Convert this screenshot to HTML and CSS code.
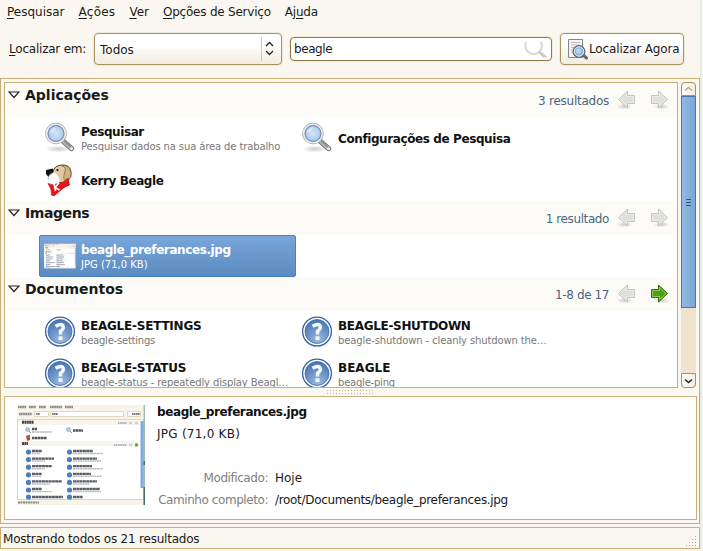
FILE: index.html
```html
<!DOCTYPE html>
<html lang="pt">
<head>
<meta charset="utf-8">
<title>Pesquisar</title>
<link rel="stylesheet" href="styles.css">
</head>
<body>
<svg width="0" height="0" class="defs" aria-hidden="true">
  <defs>
    <radialGradient id="lens"><stop offset="0" stop-color="#d3e4f7"/><stop offset=".6" stop-color="#b9d2f0"/><stop offset="1" stop-color="#8fb3e2"/></radialGradient>
    <radialGradient id="shade"><stop offset="0" stop-color="#000" stop-opacity=".2"/><stop offset="1" stop-color="#000" stop-opacity="0"/></radialGradient>
    <radialGradient id="helpfill" cx=".55" cy=".85" r=".9"><stop offset="0" stop-color="#9dbbe0"/><stop offset=".5" stop-color="#6b93c8"/><stop offset="1" stop-color="#426fae"/></radialGradient>
    <symbol id="magnifier" viewBox="0 0 32 32">
      <ellipse cx="14" cy="27" rx="13" ry="3.500" fill="url(#shade)"/>
      <path d="M19.500 19.500 27.500 26.500" stroke="#777" stroke-width="5.200" stroke-linecap="round"/>
      <path d="M19.500 19.500 27.500 26.500" stroke="#b5b5b2" stroke-width="3.400" stroke-linecap="round"/>
      <path d="M20 18.800 27 25" stroke="#8b8b8b" stroke-width="1.200"/>
      <circle cx="27.500" cy="26.500" r="1.500" fill="#e8e8e8"/>
      <circle cx="12" cy="11.500" r="9.200" fill="url(#lens)" stroke="#a3a39f" stroke-width="3"/>
      <circle cx="12" cy="11.500" r="9.300" fill="none" stroke="#ededeb" stroke-width="1.600"/>
      <circle cx="12" cy="11.500" r="7.900" fill="none" stroke="#6f91c4" stroke-width=".9"/>
      <path d="M6 11Q7 5 13 5.500Q10 7 9 10Z" fill="#fff" opacity=".5"/>
    </symbol>
    <symbol id="help" viewBox="0 0 32 32">
      <ellipse cx="17" cy="28" rx="12" ry="4" fill="url(#shade)"/>
      <circle cx="16" cy="15.500" r="14.400" fill="#fff" stroke="#36609f" stroke-width="1.300"/>
      <circle cx="16" cy="15.500" r="12" fill="url(#helpfill)" stroke="#3f6cab" stroke-width=".8"/>
      <path d="M11.500 10.300Q18.700 6.200 19.400 11.200Q19.500 13.400 16.500 15.200V18.500" fill="none" stroke="#f3f6fa" stroke-width="3.500"/>
      <path d="M14.500 20.300h4v3.700h-4z" fill="#f3f6fa"/>
    </symbol>
    <symbol id="arrow" viewBox="0 0 20 20">
      <ellipse class="shadow" cx="11.500" cy="16.500" rx="8" ry="3"/>
      <path class="body" d="M1.500 5.500h7v-4.500l9 8.500-9 8.500v-4.500h-7z"/>
      <path class="shine" d="M2.500 6.500h7V3.400l6.500 6.100-6.500 6.100v-3.100h-7z"/>
    </symbol>
  </defs>
</svg>

<div class="window">
  <nav class="menubar">
    <span><u>P</u>esquisar</span><span class="wide"><u>A</u>ções</span><span><u>V</u>er</span><span class="tight-2"><u>O</u>pções de Serviço</span><span class="tight-2">Aj<u>u</u>da</span>
  </nav>

  <div class="toolbar">
    <label class="scope-label tight-2"><u>L</u>ocalizar em:</label>
    <div class="combo"><span>Todos</span>
      <svg class="updown" width="20" height="26" viewBox="0 0 20 26"><path d="M.5 1v24" stroke="#d8c8a0"/><path d="M5 10l3.500-3.500L12 10M5 15l3.500 3.500L12 15" fill="none" stroke="#222" stroke-width="1.300"/></svg>
    </div>
    <div class="entry"><span class="tight-4">beagle</span>
      <svg width="26" height="19" viewBox="0 0 26 19"><path d="M3.200 2A8.300 8.300 0 0 0 3.300 9.500A8.300 8.300 0 0 0 18 9.500A8.300 8.300 0 0 0 18 2" fill="none" stroke="#d7d7d7" stroke-width="2"/><path d="M15 12l5 5h4l-6-5z" fill="#ccc" stroke="#ccc"/></svg>
    </div>
    <button class="find">
      <svg width="22" height="22" viewBox="0 0 22 22"><path d="M1.500 1.500h14v18h-14z" fill="#f4f4f2" stroke="#858582"/><path d="M4 4.500h9M4 7h9M4 9.500h5M4 12h3M4 14.500h3" stroke="#bdbdba"/><path d="M15.500 16.500l4 3.500" stroke="#696b68" stroke-width="3" stroke-linecap="round"/><circle cx="12" cy="13.500" r="5.800" fill="#8bb4e4" stroke="#666b72" stroke-width="1.400"/><circle cx="12" cy="13.500" r="4.700" fill="#8db5e6" stroke="#dfeaf6"/><circle cx="11.500" cy="13" r="2.500" fill="#b9d3f2"/></svg>
      <span>Localizar Agora</span>
    </button>
  </div>

  <main class="frame">
    <div class="upper">
      <div class="results">
        <header class="group">
          <svg class="tri" width="12" height="8" viewBox="0 0 12 8"><path d="M1 1h10L6 6.500z"/></svg>
          <h2>Aplicações</h2><span class="count">3 resultados</span>
          <svg class="nav off"><use href="#arrow" transform="matrix(-1 0 0 1 20 0)"/></svg><svg class="nav off"><use href="#arrow"/></svg>
        </header>
        <div class="grid">
          <div class="item"><svg class="icon"><use href="#magnifier"/></svg><div><b>Pesquisar</b><small>Pesquisar dados na sua área de trabalho</small></div></div>
          <div class="item"><svg class="icon"><use href="#magnifier"/></svg><div><b>Configurações de Pesquisa</b></div></div>
          <div class="item"><svg class="icon dog" viewBox="0 0 32 32"><path d="M9 8Q10 1.500 18 1Q26 .5 27 8Q28 13 24 16Q22 20 17 19L9 17Q5 17 4 14Z" fill="#e2c9a6" stroke="#332a20" stroke-width=".9"/><path d="M18 2Q23 3 20.500 9Q18.500 16 22 18Q27 16 27 9Q26 2 21 1.500Z" fill="#d2b183" stroke="#6a5233" stroke-width=".6"/><path d="M9 9Q12 8 13 11Q17 15 15 19.500Q10 20 5 17L4 13Z" fill="#fff"/><path d="M2 6L9 4.500 9 8Q5 10 4.500 13L2 10Z" fill="#111"/><circle cx="13.500" cy="6" r="1.100" fill="#111"/><path d="M4 19.500Q9 22 15 19.500Q21 18 24 14L25.500 21Q20 23 17 26L10 32 7.500 31Q8 25 4 19.500Z" fill="#e8141a" stroke="#b00008" stroke-width=".6"/><path d="M10 19.500l1.500 7.500M15 19l-4 4.500 4.500 2.500" fill="none" stroke="#fff" stroke-width="1.600"/></svg><div><b>Kerry Beagle</b></div></div>
        </div>
        <header class="group">
          <svg class="tri" width="12" height="8" viewBox="0 0 12 8"><path d="M1 1h10L6 6.500z"/></svg>
          <h2 class="tight-4">Imagens</h2><span class="count narrow">1 resultado</span>
          <svg class="nav off"><use href="#arrow" transform="matrix(-1 0 0 1 20 0)"/></svg><svg class="nav off"><use href="#arrow"/></svg>
        </header>
        <div class="grid">
          <div class="item selected"><svg class="icon" viewBox="0 0 32 32"><use href="#shot" y="3.500" width="32" height="25"/></svg><div><b>beagle_preferances.jpg</b><small class="size">JPG (71,0 KB)</small></div></div>
        </div>
        <header class="group">
          <svg class="tri" width="12" height="8" viewBox="0 0 12 8"><path d="M1 1h10L6 6.500z"/></svg>
          <h2>Documentos</h2><span class="count narrow">1-8 de 17</span>
          <svg class="nav off"><use href="#arrow" transform="matrix(-1 0 0 1 20 0)"/></svg><svg class="nav on"><use href="#arrow"/></svg>
        </header>
        <div class="grid docs">
          <div class="item"><svg class="icon"><use href="#help"/></svg><div><b>BEAGLE-SETTINGS</b><small class="tight-2">beagle-settings</small></div></div>
          <div class="item"><svg class="icon"><use href="#help"/></svg><div><b class="tight-3">BEAGLE-SHUTDOWN</b><small>beagle-shutdown - cleanly shutdown the…</small></div></div>
          <div class="item"><svg class="icon"><use href="#help"/></svg><div><b>BEAGLE-STATUS</b><small>beagle-status - repeatedly display Beagl…</small></div></div>
          <div class="item"><svg class="icon"><use href="#help"/></svg><div><b class="loose">BEAGLE</b><small class="tight-2">beagle-ping</small></div></div>
        </div>
      </div>
      <div class="scrollbar">
        <div class="step up"><svg width="9" height="6" viewBox="0 0 9 6"><path d="M1 4.500l3.500-3 3.500 3"/></svg></div>
        <div class="thumb"><i></i></div>
        <div class="step down"><svg width="9" height="6" viewBox="0 0 9 6"><path d="M1 1.500l3.500 3 3.500-3"/></svg></div>
      </div>
    </div>
    <div class="grip"><i></i></div>
    <section class="details">
      <svg class="preview" width="128" height="100" viewBox="0 0 128 100">
        <symbol id="shot" viewBox="0 0 128 100" preserveAspectRatio="none">
          <path d="M0 0h128v100H0z" fill="#f8f4ea"/>
          <path d="M1 2h8M12 2h7M22 2h7M33 2h12M48 2h8M2 9h13" stroke="#8b8984" stroke-width="2.600" stroke-dasharray="1.700 .4"/>
          <path d="M17.500 6.500h14v5h-14zM33.500 6.500h73v5h-73zM110.500 6.500h13v5h-13z" fill="#fff" stroke="#d7c8a6" stroke-width=".7"/>
          <path d="M19 9h4M35 9h6M115 9h8" stroke="#777" stroke-width="2" stroke-dasharray="1.500 .4"/>
          <path d="M.5 14.500h126v80H.5z" fill="#fff" stroke="#cfbd91" stroke-width=".6"/>
          <path d="M1 15h122v5H1zM1 36h122v5H1z" fill="#f8f5ec"/>
          <path d="M5 17.300h12M5 38.500h6" stroke="#444" stroke-width="3" stroke-dasharray="2 .4"/>
          <path d="M101 18h9M97 40h13" stroke="#a3b3c3" stroke-width="1.800" stroke-dasharray="1.500 .6"/>
          <path d="M112 18h3M118 18h3M112 40h3" stroke="#cfd2cc" stroke-width="2.500"/>
          <circle cx="119.500" cy="40" r="1.700" fill="#55b22a"/>
          <path d="M123.500 16h3v67h-3z" fill="#80aadd"/>
          <g fill="#b8d2ee" stroke="#8ba5c7"><circle cx="10.500" cy="24.500" r="1.800"/><circle cx="51.500" cy="24.500" r="1.800"/></g>
          <path d="M12 26l2 2M53 26l2 2" stroke="#888"/>
          <path d="M9 31l4-1v5l-3 1z" fill="#c9423c"/><path d="M9.500 30.500h3v2h-3z" fill="#8f6b4a"/>
          <path d="M15 24h5M56 25.500h10M15 33h15" stroke="#555" stroke-width="2.400" stroke-dasharray="2.500 .4"/>
          <path d="M15 27h20" stroke="#b5b5b5" stroke-width="1.400" stroke-dasharray="2 .5"/>
          <g stroke="#4d7fbd" stroke-width="5.200" stroke-linecap="round"><path d="M11.500 47v0M11.500 54.600v0M11.500 62.200v0M11.500 69.800v0M11.500 77.400v0M11.500 85v0M11.500 92v0M52.500 47v0M52.500 54.600v0M52.500 62.200v0M52.500 69.800v0M52.500 77.400v0M52.500 85v0M52.500 92v0"/></g>
          <path d="M15 46h10M15 53.600h22M15 61.200h20M15 68.800h10M15 76.400h30M15 84h10M15 92h31M56 46h20M56 53.600h24M56 61.200h19M56 68.800h18M56 76.400h24M56 84h27M56 92h10" stroke="#5b6068" stroke-width="2.300" stroke-dasharray="3 .3"/>
          <path d="M15 48.500h8M15 56h13M15 63.700h13M15 71.300h9M15 79h18M15 86.600h20M56 48.500h30M56 56h28M56 63.700h30M56 71.300h29M56 79h17M56 86.600h28" stroke="#bbb" stroke-width="1.400" stroke-dasharray="2 .4"/>
          <path d="M0 95h127v5H0z" fill="#f7f3e9"/><path d="M1 97.500h21" stroke="#8b8984" stroke-width="2" stroke-dasharray="2 .5"/>
          <path d="M127.200 0v100" stroke="#7ca59b"/><path d="M127.200 56v4M127.200 82v18" stroke="#254b41"/>
        </symbol>
        <use href="#shot" width="128" height="100"/>
      </svg>
      <div class="info">
        <b>beagle_preferances.jpg</b>
        <span class="kb">JPG (71,0 KB)</span>
        <dl><dt>Modificado:</dt><dd>Hoje</dd><dt>Caminho completo:</dt><dd class="tight-3">/root/Documents/beagle_preferances.jpg</dd></dl>
      </div>
    </section>
  </main>

  <footer class="status"><span class="tight-2">Mostrando todos os 21 resultados</span>
    <svg width="12" height="12" viewBox="0 0 12 12"><path d="M10 1h1v1h-1zM10 4h1v1h-1zM7 4h1v1H7zM10 7h1v1h-1zM7 7h1v1H7zM4 7h1v1H4zM10 10h1v1h-1zM7 10h1v1H7zM4 10h1v1H4zM1 10h1v1H1z" fill="#bda974"/></svg>
  </footer>
</div>
</body>
</html>
```

FILE: styles.css
```css
* { box-sizing: border-box; }
body {
  margin: 0;
  width: 703px;
  height: 551px;
  overflow: hidden;
  background: linear-gradient(90deg, #faf7f0 700px, #dde4da 700px, #f3f3ee 702px);
  color: #1a1a1a;
  font: 12px/16px "DejaVu Sans", sans-serif;
  white-space: nowrap;
}
.defs { position: absolute; }
svg { display: block; flex: none; }
u { text-underline-offset: 2px; text-decoration-thickness: 1px; text-decoration-skip-ink: none; }

.window { width: 700px; height: 551px; display: flex; flex-direction: column; }
.menubar { display: flex; height: 24px; padding: 4px 7px; gap: 14px; }
.toolbar { display: flex; align-items: center; height: 50px; padding-left: 9px; }
.scope-label { width: 85px; }

.combo, .find {
  height: 32px;
  border: 1px solid #a8925e;
  border-radius: 4px;
  background: linear-gradient(#fff 0 45%, #faf8f3 55%, #f2ecdf);
  box-shadow: 0 0 0 1px #f0ead8;
  display: flex;
  align-items: center;
  color: #1a1a1a;
}
.combo { width: 188px; padding: 2px 0 0 5px; justify-content: space-between; }
.combo .updown { margin-top: -2px; }
.entry {
  margin-left: 8px;
  width: 262px;
  height: 24px;
  padding: 0 2px 0 3px;
  border: 1px solid #8f7a48;
  border-radius: 4px;
  background: #fff;
  box-shadow: 0 0 0 1px #f0ead8;
  display: flex;
  align-items: center;
  justify-content: space-between;
}
.find { margin-left: 8px; width: 124px; padding: 0 0 0 6px; gap: 0; font: inherit; letter-spacing: -.12px; }

.frame {
  height: 446px;
  margin-top: 4px;
  padding: 3px 2px 3px 3px;
  border: 1px solid #c8b078;
}
.upper { display: flex; justify-content: space-between; height: 306px; padding-right: 1px; }
.results { width: 674px; border: 1px solid #c8b078; background: #fff; overflow: hidden; }
.group {
  display: flex;
  align-items: center;
  height: 34px;
  padding: 0 7px 0 3px;
  background: #fdfbf7;
}
.group h2 { flex: 1; margin: -10px 0 0 5px; font-size: 14px; line-height: 20px; }
.tri { margin-top: -10px; fill: #fff; stroke: #222; stroke-width: 1.2; }
.count { color: #4a6680; margin: 2px 7px 0 0; letter-spacing: -.25px; }
.count.narrow { letter-spacing: -.4px; }
.nav { width: 20px; height: 20px; margin-right: 14px; }
.nav:last-child { margin-right: 0; }
.shadow { fill: url(#shade); stroke: none; }
.off { fill: #dfe0db; stroke: #c3c6bf; }
.on { fill: #4ea30c; stroke: #307005; }
.shine { fill: none; stroke: #fff; stroke-opacity: .35; }

.grid { display: grid; grid-template-columns: 257px 257px; padding-left: 34px; }
.item { display: flex; align-items: center; gap: 5px; height: 42px; padding-left: 5px; }
.item > div { padding-top: 2px; }
.item b, .item small { display: block; }
.item b, .info b { color: #111; letter-spacing: -.4px; }
.item b { line-height: 15px; }
.docs b { letter-spacing: -.22px; }
.item small { font-size: 10px; line-height: 13px; color: #777; letter-spacing: -.12px; }
.icon { width: 32px; height: 32px; }
.selected {
  border: 1px solid #4c7fbd;
  border-radius: 2px;
  padding-left: 4px;
  background: linear-gradient(#79a6da, #5a8bc1);
}
.selected b, .selected small { color: #fff; }
.item .size, .item .loose { letter-spacing: 0; }

.scrollbar { width: 15px; height: 306px; display: flex; flex-direction: column; background: #eee3cd; border-radius: 4px; }
.step { height: 14px; border: 1px solid #a8925e; background: linear-gradient(90deg, #fff, #f3ecdd); display: flex; align-items: center; justify-content: center; }
.step path { fill: none; stroke: #bdaa7c; stroke-width: 1.500; }
.up { border-radius: 4px 4px 0 0; }
.down { margin-top: auto; height: 15px; border-radius: 0 0 4px 4px; }
.down path { stroke: #222; }
.thumb { height: 212px; border: 1px solid #4a77ae; background: linear-gradient(90deg, #94b9e3, #7ba6da); display: flex; align-items: center; justify-content: center; }
.thumb i { width: 5px; height: 7px; background: repeating-linear-gradient(#2c5180 0 1px, transparent 1px 3px); }

.grip { height: 8px; display: flex; justify-content: center; align-items: center; }
.grip i { width: 47px; height: 5px; background: radial-gradient(circle at .5px .5px, #c5b58c .7px, transparent .8px) 0 0 / 3px 3px; }
.details { height: 124px; padding: 4px 12px 0; display: flex; gap: 12px; border: 1px solid #c8b078; background: #fff; }
.preview { margin-top: 4px; filter: blur(.45px); }
.info b, .info span { display: block; line-height: 22px; }
.info .kb { letter-spacing: .25px; }
.info dl { margin: 22px 0 0; display: grid; grid-template-columns: 111px auto; column-gap: 7px; line-height: 22px; }
.info dt { text-align: right; color: #808080; letter-spacing: -.43px; }
.info dd { margin: 0; }

.status {
  height: 22px;
  margin-top: 3px;
  padding: 1px 2px 0 2px;
  border: 1px solid #c8b078;
  display: flex;
  align-items: center;
  justify-content: space-between;
}
.status svg { align-self: flex-end; margin-bottom: 1px; }

.wide { letter-spacing: .25px; }
.tight-2, .item .tight-2 { letter-spacing: -.22px; }
.tight-3, .item .tight-3 { letter-spacing: -.32px; }
.tight-4 { letter-spacing: -.42px; }
```
